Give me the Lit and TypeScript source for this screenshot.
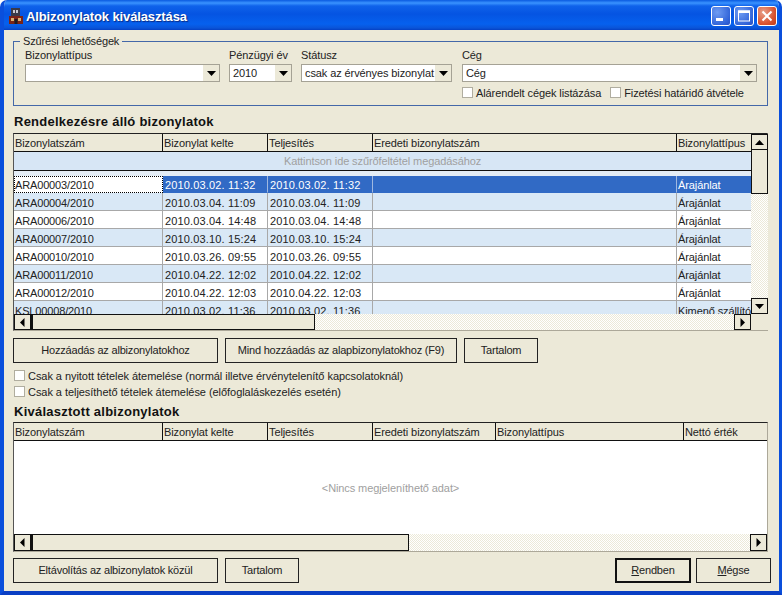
import { LitElement, html, css } from "lit";
import { customElement } from "lit/decorators.js";

const arrow = (dir: "down" | "up" | "left" | "right") => {
  const pts = {
    down: "1,3 10,3 5.5,8",
    up: "1,8 10,8 5.5,3",
    left: "7.5,1 7.5,10 3,5.5",
    right: "3.5,1 3.5,10 8,5.5",
  }[dir];
  return html`<svg class="arrow" width="11" height="11" viewBox="0 0 11 11"><polygon points=${pts} fill="#000"></polygon></svg>`;
};

const rows = [
  ["ARA00003/2010", "2010.03.02. 11:32", "2010.03.02. 11:32", "", "Árajánlat"],
  ["ARA00004/2010", "2010.03.04. 11:09", "2010.03.04. 11:09", "", "Árajánlat"],
  ["ARA00006/2010", "2010.03.04. 14:48", "2010.03.04. 14:48", "", "Árajánlat"],
  ["ARA00007/2010", "2010.03.10. 15:24", "2010.03.10. 15:24", "", "Árajánlat"],
  ["ARA00010/2010", "2010.03.26. 09:55", "2010.03.26. 09:55", "", "Árajánlat"],
  ["ARA00011/2010", "2010.04.22. 12:02", "2010.04.22. 12:02", "", "Árajánlat"],
  ["ARA00012/2010", "2010.04.22. 12:03", "2010.04.22. 12:03", "", "Árajánlat"],
  ["KSL00008/2010", "2010.03.02. 11:36", "2010.03.02. 11:36", "", "Kimenő szállítólevél"],
];

const head1 = ["Bizonylatszám", "Bizonylat kelte", "Teljesítés", "Eredeti bizonylatszám", "Bizonylattípus"];
const head2 = ["Bizonylatszám", "Bizonylat kelte", "Teljesítés", "Eredeti bizonylatszám", "Bizonylattípus", "Nettó érték"];
const cols1 = "149px 105px 105px 304px 74px";
const cols2 = "149px 105px 105px 123px 188px 83px";

const rightTicks = [110, 115, 120, 140, 420, 437, 465, 477, 487, 533, 563, 570, 577, 590];
const bottomTicks = [75, 85, 92, 188, 232, 250, 258, 270, 438, 520];

@customElement("app-root")
export class AppRoot extends LitElement {
  static styles = css`
    :host {
      display: block;
      position: relative;
      width: 784px;
      height: 596px;
      overflow: hidden;
      background: #fff;
      font-family: Tahoma, "Liberation Sans", Arial, sans-serif;
      font-size: 11px;
      letter-spacing: -0.1px;
      color: #222;
    }
    * { box-sizing: border-box; }
    .desktop { position: absolute; left: 0; top: 0; }
    .window {
      position: relative;
      width: 782px;
      height: 595px;
      display: flex;
      flex-direction: column;
      background: #ece9d8;
      border-radius: 7px 7px 0 0;
      overflow: hidden;
      border-left: 4px solid #0a4fdc;
      border-right: 3px solid #0a4fdc;
      border-bottom: 4px solid #0a3fc4;
    }
    .titlebar {
      height: 30px;
      margin: 0 -3px 0 -4px;
      flex: none;
      display: flex;
      align-items: center;
      padding: 2px 5px 0 8px;
      background: linear-gradient(#0a5ae0 0, #3a93ff 3px, #0f62ea 6px, #0554e2 14px, #0661ee 24px, #0a54d8 28px, #0440c4 30px);
      color: #fff;
      font-weight: bold;
      font-size: 13px;
      letter-spacing: -0.12px;
    }
    .title-icon { margin-right: 2px; flex: none; }
    .title { flex: 1; margin-top: 1px; text-shadow: 1px 1px 1px #0a2a80; }
    .winbtns { display: flex; gap: 3px; }
    .winbtn {
      width: 20px;
      height: 20px;
      border: 1px solid #fff;
      border-radius: 3px;
      display: flex;
      align-items: center;
      justify-content: center;
      background: radial-gradient(circle at 30% 30%, #6f9cf2, #2f62d8 75%, #2a50c0);
    }
    .winbtn.close { background: radial-gradient(circle at 30% 30%, #e8a08a, #d8512e 65%, #c03c18); }
    .body {
      flex: 1;
      min-height: 0;
      padding: 11px 0 0 9px;
      display: flex;
      flex-direction: column;
      align-items: flex-start;
    }
    .group {
      position: relative;
      width: 755px;
      height: 65px;
      border: 1px solid #4468a8;
      padding: 7px 0 0 11px;
      flex: none;
    }
    .legend {
      position: absolute;
      left: 6px;
      top: -7px;
      padding: 0 3px;
      background: #ece9d8;
      line-height: 13px;
      letter-spacing: -0.15px;
    }
    .fields { display: flex; }
    .field { display: flex; flex-direction: column; gap: 2px; }
    .field label { line-height: 13px; height: 13px; white-space: nowrap; }
    .combo {
      height: 18px;
      border: 1px solid #a5a295;
      background: #fff;
      display: flex;
      align-items: center;
      padding-left: 3px;
      white-space: nowrap;
    }
    .combo span { flex: 1; overflow: hidden; }
    .combo .drop {
      width: 16px;
      height: 16px;
      flex: none;
      display: flex;
      align-items: center;
      justify-content: center;
      background: #ece9d8;
    }
    .checks { display: flex; margin: 4px 0 0 437px; }
    .check {
      display: flex;
      align-items: center;
      gap: 3px;
      height: 13px;
      white-space: nowrap;
    }
    .box {
      width: 11px;
      height: 11px;
      background: #fff;
      border: 1px solid #b0ad9f;
      flex: none;
    }
    h2 {
      margin: 8px 0 0 1px;
      font-size: 13px;
      line-height: 16px;
      font-weight: bold;
      letter-spacing: 0.25px;
      color: #111;
    }
    h2.second { margin-top: 6px; }
    .grid {
      width: 755px;
      border-top: 1px solid #222;
      border-left: 1px solid #555;
      border-right: 1px solid #aca899;
      border-bottom: 1px solid #aca899;
      display: grid;
      flex: none;
      background: #ece9d8;
    }
    .grid.one { margin-top: 3px; height: 198px; grid-template-columns: 737px 17px; grid-template-rows: 180px 16px; }
    .grid.two { margin-top: 2px; height: 130px; grid-template-rows: 1fr 17px; background: #fff; }
    .pane { overflow: hidden; min-width: 0; background: #fff; }
    .row { display: grid; height: 18px; line-height: 18px; }
    .cell {
      padding: 1px 0 0 1px;
      overflow: hidden;
      white-space: nowrap;
      border-right: 1px solid #a8a8a8;
      border-bottom: 1px solid #a8a8a8;
    }
    .cell.id { letter-spacing: -0.15px; }
    .cell.date { letter-spacing: 0.15px; }
    .row > .cell:nth-child(n + 2) { padding-left: 2px; }
    .row > .cell:last-child { border-right: 0; padding-left: 1px; }
    .row.alt { background: #d9e8f6; }
    .row.sel { height: 17px; line-height: 16px; background: #316ac5; color: #fff; }
    .row.sel .cell { border-color: #316ac5; }
    .row.sel .cell:first-child {
      background: #fff;
      color: #222;
      border: 1px dotted #000;
      padding: 0;
    }
    .row.sel .cell:nth-child(n + 2) { border-right-color: #9fb8e0; }
    .row.head { height: 18px; line-height: 17px; background: #ece9d8; border-bottom: 1px solid #111; }
    .head .cell { border-right: 1px solid #111; border-bottom: 0; padding: 1px 0 0 1px; }
    .head > .cell:nth-child(n + 2) { padding-left: 1px; }
    .head .cell:last-child { border-right: 0; }
    .filter {
      height: 19px;
      background: #d7e6f5;
      border-bottom: 1px solid #111;
      color: #a0a0a0;
      text-align: center;
      line-height: 19px;
    }
    .gap { height: 5px; background: #e4edf6; }
    .sb-v { display: flex; flex-direction: column; }
    .sb-h { display: flex; min-width: 0; }
    .sb-btn {
      width: 17px;
      height: 16px;
      flex: none;
      border: 1px solid #111;
      background: #ece9d8;
      display: flex;
      align-items: center;
      justify-content: center;
    }
    .sb-h .sb-btn { height: 100%; width: 17px; }
    .thumb { background: #ece9d8; border: 1px solid #111; flex: none; }
    .sb-v .thumb { height: 44px; width: 17px; border-top: 0; }
    .sb-h .thumb { border-left: 2px solid #111; height: 100%; }
    .hatch {
      flex: 1;
      min-width: 0;
      background: repeating-conic-gradient(#ece9d8 0 25%, #fff 0 50%) 0 0 / 2px 2px;
    }
    .corner { background: #ece9d8; }
    .empty {
      height: 93px;
      display: flex;
      align-items: center;
      justify-content: center;
      color: #a0a0a0;
      padding-top: 1px;
    }
    .two .pane { display: flex; flex-direction: column; }
    .btn {
      height: 25px;
      border: 1px solid #222;
      background: #ece9d8;
      display: flex;
      align-items: center;
      justify-content: center;
      padding-bottom: 1px;
      white-space: nowrap;
      flex: none;
      letter-spacing: -0.2px;
    }
    .btn.def { border-width: 2px; border-color: #111; }
    .btn u { text-decoration: underline; }
    .actions { display: flex; gap: 7px; margin-top: 7px; }
    .opts { display: flex; flex-direction: column; gap: 3px; margin: 6px 0 0 1px; letter-spacing: -0.05px; }
    .bottom { display: flex; width: 758px; margin-top: 6px; }
    .bottom .spacer { flex: 1; }
  `;

  private headRow(labels: string[], cols: string) {
    return html`<div class="row head" style="grid-template-columns:${cols}">
      ${labels.map((l) => html`<div class="cell">${l}</div>`)}
    </div>`;
  }

  render() {
    return html`
      <svg class="desktop" width="784" height="596">
        ${rightTicks.map((y) => html`<rect x="782" y=${y} width="2" height="1" fill="#333"></rect>`)}
        ${bottomTicks.map((x) => html`<rect x=${x} y="595" width="1" height="1" fill="#333"></rect>`)}
      </svg>
      <div class="window">
        <div class="titlebar">
          <svg class="title-icon" width="16" height="18" viewBox="0 0 16 18">
            <rect x="3" y="1" width="9" height="12" fill="#3a3a48"></rect>
            <rect x="5" y="3" width="2" height="3" fill="#c8c8d0"></rect>
            <rect x="8" y="3" width="2" height="3" fill="#c8c8d0"></rect>
            <rect x="1" y="9" width="14" height="8" fill="#7a2418"></rect>
            <rect x="3" y="11" width="3" height="3" fill="#d8b070"></rect>
            <rect x="10" y="11" width="3" height="3" fill="#d8b070"></rect>
            <rect x="6.5" y="12" width="3" height="5" fill="#1c1c24"></rect>
          </svg>
          <div class="title">Albizonylatok kiválasztása</div>
          <div class="winbtns">
            <div class="winbtn">
              <svg width="14" height="14" viewBox="0 0 14 14"><rect x="2" y="9" width="7" height="3" fill="#fff"></rect></svg>
            </div>
            <div class="winbtn">
              <svg width="14" height="14" viewBox="0 0 14 14"><rect x="1.5" y="2" width="11" height="10" fill="none" stroke="#fff" stroke-width="1"></rect><rect x="1" y="1.5" width="12" height="2.5" fill="#fff"></rect></svg>
            </div>
            <div class="winbtn close">
              <svg width="14" height="14" viewBox="0 0 14 14"><path d="M2.5 2.5 L11.5 11.5 M11.5 2.5 L2.5 11.5" stroke="#fff" stroke-width="2"></path></svg>
            </div>
          </div>
        </div>
        <div class="body">
          <div class="group">
            <div class="legend">Szűrési lehetőségek</div>
            <div class="fields">
              <div class="field" style="width:195px;margin-right:9px"><label>Bizonylattípus</label><div class="combo"><span></span><div class="drop">${arrow("down")}</div></div></div>
              <div class="field" style="width:63px;margin-right:9px"><label>Pénzügyi év</label><div class="combo"><span>2010</span><div class="drop">${arrow("down")}</div></div></div>
              <div class="field" style="width:151px;margin-right:10px"><label>Státusz</label><div class="combo"><span>csak az érvényes bizonylat</span><div class="drop">${arrow("down")}</div></div></div>
              <div class="field" style="width:295px"><label>Cég</label><div class="combo"><span>Cég</span><div class="drop">${arrow("down")}</div></div></div>
            </div>
            <div class="checks">
              <div class="check" style="margin-right:9px"><div class="box"></div>Alárendelt cégek listázása</div>
              <div class="check"><div class="box"></div>Fizetési határidő átvétele</div>
            </div>
          </div>

          <h2>Rendelkezésre álló bizonylatok</h2>
          <div class="grid one">
            <div class="pane">
              ${this.headRow(head1, cols1)}
              <div class="filter">Kattintson ide szűrőfeltétel megadásához</div>
              <div class="gap"></div>
              ${rows.map(
                (r, i) => html`<div class="row ${i === 0 ? "sel" : i % 2 ? "alt" : ""}" style="grid-template-columns:${cols1}">
                  ${r.map((c, j) => html`<div class="cell ${j === 0 ? "id" : j < 3 ? "date" : ""}">${c}</div>`)}
                </div>`
              )}
            </div>
            <div class="sb-v">
              <div class="sb-btn">${arrow("up")}</div>
              <div class="thumb"></div>
              <div class="hatch"></div>
              <div class="sb-btn">${arrow("down")}</div>
            </div>
            <div class="sb-h">
              <div class="sb-btn">${arrow("left")}</div>
              <div class="thumb" style="width:284px"></div>
              <div class="hatch"></div>
              <div class="sb-btn">${arrow("right")}</div>
            </div>
            <div class="corner"></div>
          </div>

          <div class="actions">
            <div class="btn" style="width:205px">Hozzáadás az albizonylatokhoz</div>
            <div class="btn" style="width:232px">Mind hozzáadás az alapbizonylatokhoz (F9)</div>
            <div class="btn" style="width:74px">Tartalom</div>
          </div>
          <div class="opts">
            <div class="check"><div class="box"></div>Csak a nyitott tételek átemelése (normál illetve érvénytelenítő kapcsolatoknál)</div>
            <div class="check"><div class="box"></div>Csak a teljesíthető tételek átemelése (előfoglaláskezelés esetén)</div>
          </div>

          <h2 class="second">Kiválasztott albizonylatok</h2>
          <div class="grid two">
            <div class="pane">
              ${this.headRow(head2, cols2)}
              <div class="empty">&lt;Nincs megjeleníthető adat&gt;</div>
            </div>
            <div class="sb-h">
              <div class="sb-btn">${arrow("left")}</div>
              <div class="thumb" style="width:378px"></div>
              <div class="hatch"></div>
              <div class="sb-btn">${arrow("right")}</div>
            </div>
          </div>

          <div class="bottom">
            <div class="btn" style="width:205px">Eltávolítás az albizonylatok közül</div>
            <div class="btn" style="width:74px;margin-left:7px">Tartalom</div>
            <div class="spacer"></div>
            <div class="btn def" style="width:76px"><span><u>R</u>endben</span></div>
            <div class="btn" style="width:75px;margin-left:5px"><span><u>M</u>égse</span></div>
          </div>
        </div>
      </div>
    `;
  }
}
